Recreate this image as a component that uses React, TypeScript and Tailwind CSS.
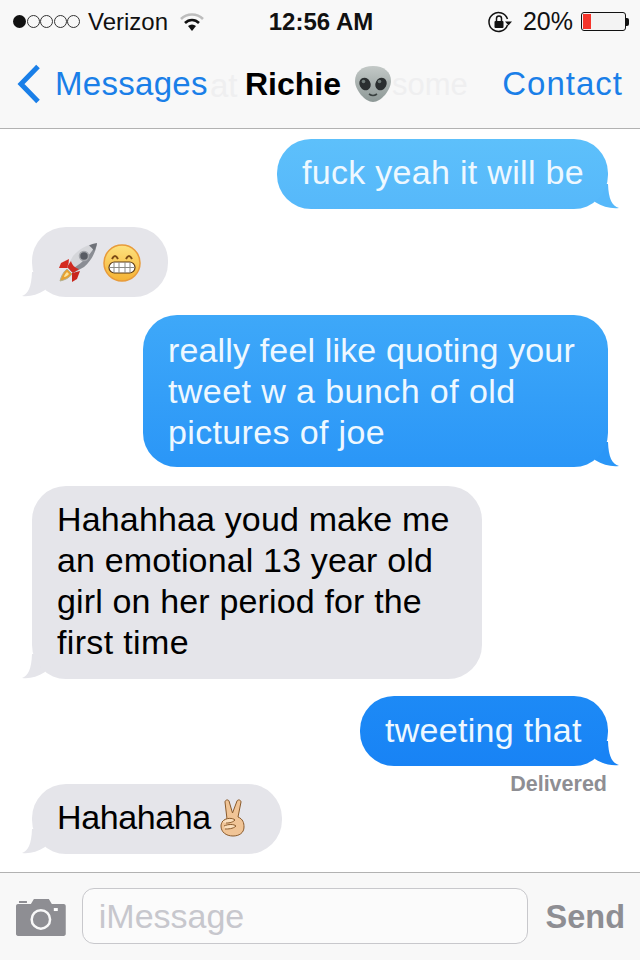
import type { ReactNode } from 'react'

function Tail({ side, className }: { side: 'left' | 'right'; className: string }) {
  if (side === 'right') {
    return (
      <svg className={`absolute right-[-12px] bottom-0 -z-10 ${className}`} width="25" height="25" viewBox="0 0 25 25">
        <path d="M0 18 C8 23 16 24.800 24 24 C17 22 13.500 15 13 0 L0 0Z" />
      </svg>
    )
  }
  return (
    <svg className={`absolute left-[-12px] bottom-0 -z-10 ${className}`} width="25" height="25" viewBox="0 0 25 25">
      <path d="M25 18 C17 23 10 24.800 2 24 C8 22 11.500 15 12 0 L25 0Z" />
    </svg>
  )
}

function Sent({ className, tail, children }: { className: string; tail: string; children: ReactNode }) {
  return (
    <div className="isolate flex justify-end pr-[32px]">
      <div className={`relative rounded-[34px] pl-[25px] text-[34px] leading-[41px] tracking-[0.15px] text-[#eef8ff] ${className}`}>
        <Tail side="right" className={tail} />
        <div className="relative whitespace-nowrap">{children}</div>
      </div>
    </div>
  )
}

function Received({ className, children }: { className: string; children: ReactNode }) {
  return (
    <div className="isolate flex justify-start pl-[32px]">
      <div className={`relative rounded-[34px] bg-[#e5e5ea] pl-[25px] text-[34px] leading-[41px] tracking-[0.15px] text-black ${className}`}>
        <Tail side="left" className="fill-[#e5e5ea]" />
        <div className="relative whitespace-nowrap">{children}</div>
      </div>
    </div>
  )
}

function Rocket() {
  return (
    <svg width="40" height="41" viewBox="0 0 40 41">
      <path d="M11 17 L3 21 L1 26 L10 26Z" fill="#d42a1f" />
      <path d="M22 29 L19 37 L14 40 L14 31Z" fill="#c9261c" />
      <path d="M9 27 C5 30 3 35 2 39 C7 38 11 36 14 32Z" fill="#e8a12f" stroke="#b5b08e" strokeWidth="1" />
      <path d="M9 30 C7 32 6 34 6 35 C8 35 10 33 11 32Z" fill="#fbe39a" />
      <path d="M39 1 C30 2 21 7 15 14 L9 25 L15 31 L26 25 C33 19 38 10 39 1Z" fill="#d5d6da" />
      <path d="M39 1 C38 10 33 19 26 25 L15 31 L12 28 C24 22 33 12 39 1Z" fill="#8a8d94" />
      <path d="M39 1 C36 1.500 33 2.500 31 3.500 C33 5 35 7 36 9 C37.500 6 38.500 4 39 1Z" fill="#6f7279" />
      <path d="M9 25 L15 31 L21 27 C17 26 14 23 13 19Z" fill="#cf2a20" />
      <circle cx="26" cy="14" r="4.500" fill="#585b63" stroke="#a4a6ab" strokeWidth="1.500" />
    </svg>
  )
}

function Grin() {
  return (
    <svg width="38" height="38" viewBox="0 0 38 38">
      <defs>
        <linearGradient id="grinFace" x1="0" y1="0" x2="0" y2="1">
          <stop offset="0" stopColor="#fde27f" />
          <stop offset="1" stopColor="#f5b233" />
        </linearGradient>
      </defs>
      <circle cx="19" cy="19" r="18" fill="url(#grinFace)" stroke="#e89b3a" strokeWidth="1.500" />
      <path d="M9 15 Q12 9 15 15 M23 15 Q26 9 29 15" fill="none" stroke="#7b4a14" strokeWidth="2" />
      <rect x="6" y="18" width="26" height="11" rx="5.500" fill="#fff" stroke="#5d3a14" strokeWidth="1.200" />
      <path d="M6 23.500 H32 M11 18 V29 M16 18 V29 M22 18 V29 M27 18 V29" stroke="#8a8a85" strokeWidth="1" />
    </svg>
  )
}

function Alien() {
  return (
    <svg width="38" height="38" viewBox="0 0 38 38">
      <defs>
        <linearGradient id="alienFace" x1="0" y1="0" x2="0" y2="1">
          <stop offset="0" stopColor="#c3c9c7" />
          <stop offset="1" stopColor="#8d9896" />
        </linearGradient>
      </defs>
      <path d="M19 1 C30 1 37 7 37 16 C37 25 27 37 19 37 C11 37 1 25 1 16 C1 7 8 1 19 1Z" fill="url(#alienFace)" />
      <ellipse cx="11" cy="19" rx="5.500" ry="6.500" fill="#2b2f30" transform="rotate(-28 11 19)" />
      <ellipse cx="27" cy="19" rx="5.500" ry="6.500" fill="#2b2f30" transform="rotate(28 27 19)" />
      <circle cx="9.500" cy="16.500" r="1.800" fill="#6f7a78" />
      <circle cx="25.500" cy="16.500" r="1.800" fill="#6f7a78" />
      <path d="M15 29 Q19 32 23 29" fill="none" stroke="#3a4140" strokeWidth="1.600" />
    </svg>
  )
}

function Peace() {
  return (
    <svg width="27" height="38" viewBox="0 0 27 38">
      <path d="M8 20 L6 3 C6 1 9 0 10 2 L13.500 14 L18 2 C19 0 22 1 22 3 L19 18 C24 20 25 24 25 28 C25 34 20 37 14 37 C7 37 2 33 2 27 C2 24 4 21 8 20Z" fill="#f0c496" stroke="#8a5a2b" strokeWidth="1" />
      <path d="M3 23 C7 18 14 19 16 21 C13 24 9 24 7 24 M5 27 C9 25 15 25 17 27 C14 30 9 30 6 30" fill="#fbdfbd" stroke="#8a5a2b" strokeWidth="1" />
    </svg>
  )
}

function Wifi() {
  return (
    <svg width="24" height="18" viewBox="0 0 24 18">
      <path d="M1 6 C7 0 17 0 23 6" fill="none" stroke="#bdbdbd" strokeWidth="2.600" />
      <path d="M5 10 C9 6 15 6 19 10" fill="none" stroke="#111" strokeWidth="2.600" />
      <path d="M8 13 C10.500 11 13.500 11 16 13 L12 18Z" fill="#111" />
    </svg>
  )
}

function RotationLock() {
  return (
    <svg width="24" height="22" viewBox="0 0 24 22">
      <path d="M19.500 14 A9.500 9.500 0 1 1 19.500 8" fill="none" stroke="#111" strokeWidth="1.500" />
      <path d="M17 10.500 H24 L20.500 14.500Z" fill="#111" />
      <rect x="6.500" y="10" width="9" height="7" rx="1" fill="#111" />
      <path d="M8.500 10 V7.500 A2.500 2.500 0 0 1 13.500 7.500 V10" fill="none" stroke="#111" strokeWidth="1.500" />
    </svg>
  )
}

function Camera() {
  return (
    <svg width="50" height="38" viewBox="0 0 50 38">
      <path fillRule="evenodd" fill="#8e8e93" d="M3 3 H11 V5 H3Z M2 6 H15 L18 1 H33 L36 6 H48 C49 6 50 7 50 8 V36 C50 37 49 38 48 38 H2 C1 38 0 37 0 36 V8 C0 7 1 6 2 6Z M25 11 A10.500 10.500 0 1 0 25 32 A10.500 10.500 0 1 0 25 11Z M25 13.500 A8 8 0 1 1 25 29.500 A8 8 0 1 1 25 13.500Z" />
      <rect x="38" y="10" width="4" height="3" fill="#fff" />
    </svg>
  )
}

export default function App() {
  return (
    <div className="flex h-[960px] w-[640px] flex-col overflow-hidden bg-white font-['Liberation_Sans',sans-serif]">
      {/* Status bar + nav */}
      <div className="h-[129px] shrink-0 border-b border-[#b2b2b2] bg-[#f8f8f8]">
        <div className="grid h-[42px] grid-cols-[1fr_auto_1fr] items-center whitespace-nowrap pl-[13px] pr-[11px] pt-[1px] text-[#111]">
          <div className="flex items-center text-[24px]">
            <div className="flex gap-[0.5px]">
              <span className="h-[13px] w-[13px] rounded-full bg-[#111]" />
              <span className="h-[13px] w-[13px] rounded-full border border-[#333]" />
              <span className="h-[13px] w-[13px] rounded-full border border-[#333]" />
              <span className="h-[13px] w-[13px] rounded-full border border-[#333]" />
              <span className="h-[13px] w-[13px] rounded-full border border-[#333]" />
            </div>
            <span className="ml-[8px]">Verizon</span>
            <span className="ml-[12px]"><Wifi /></span>
          </div>
          <span className="text-[24px] font-bold">12:56 AM</span>
          <div className="flex items-center justify-end text-[25px]">
            <RotationLock />
            <span className="ml-[11px]">20%</span>
            <div className="ml-[8px] flex items-center">
              <div className="h-[19px] w-[45px] rounded-[3px] border border-[#111] bg-[#f3f3f3] p-[1px]">
                <div className="h-full w-[8px] bg-[#f5352b]" />
              </div>
              <div className="h-[8px] w-[3px] rounded-r-[2px] bg-[#111]" />
            </div>
          </div>
        </div>
        <div className="relative flex h-[86px] items-center justify-between pb-[2px] pl-[17px] pr-[17px]">
          <div className="flex items-center">
            <svg width="24" height="40" viewBox="0 0 24 40">
              <path d="M21 2.500 L4 20 L21 37.500" fill="none" stroke="#1a7fe8" strokeWidth="5" />
            </svg>
            <span className="ml-[14px] text-[33px] tracking-[0.3px] text-[#1a7fe8]">Messages</span>
          </div>
          <span className="absolute left-[210px] top-[19px] text-[33px] text-[#efeff0]">at</span>
          <span className="absolute left-[392px] top-[20px] text-[31px] text-[#efeff0]">some</span>
          <div className="absolute left-[245px] top-[18px] flex items-center">
            <span className="text-[32px] font-bold text-black">Richie</span>
            <span className="ml-[13px]"><Alien /></span>
          </div>
          <span className="text-[33px] tracking-[1px] text-[#1a7fe8]">Contact</span>
        </div>
      </div>

      {/* Conversation */}
      <div className="flex flex-1 flex-col pt-[10px]">
        <Sent className="w-[331px] bg-linear-to-b from-[#5dc0fb] to-[#56b8fa] pb-[16px] pt-[13px]" tail="fill-[#56b8fa]">
          <div className="tracking-[0.3px]">fuck yeah it will be</div>
        </Sent>
        <div className="mt-[18px]">
          <Received className="w-[136px] pb-[14px] pt-[15px]">
            <div className="flex h-[41px] items-center gap-[5px] pl-[1px]">
              <Rocket />
              <Grin />
            </div>
          </Received>
        </div>
        <div className="mt-[18px]">
          <Sent className="w-[465px] bg-linear-to-b from-[#3ea8f9] to-[#2a96f7] pb-[14px] pt-[15px]" tail="fill-[#2a96f7]">
            <div>really feel like quoting your</div>
            <div className="tracking-[0.42px]">tweet w a bunch of old</div>
            <div className="tracking-[0.35px]">pictures of joe</div>
          </Sent>
        </div>
        <div className="mt-[19px]">
          <Received className="w-[450px] pb-[16px] pt-[13px]">
            <div>Hahahhaa youd make me</div>
            <div>an emotional 13 year old</div>
            <div>girl on her period for the</div>
            <div className="tracking-[0.35px]">first time</div>
          </Received>
        </div>
        <div className="mt-[17px]">
          <Sent className="w-[248px] bg-linear-to-b from-[#1d8af6] to-[#1883f5] pb-[15px] pt-[14px]" tail="fill-[#1883f5]">
            <div className="tracking-[0.3px]">tweeting that</div>
          </Sent>
        </div>
        <div className="mt-[5px] pr-[33px] text-right text-[21.5px] font-bold leading-[26px] text-[#8e8e93]">Delivered</div>
        <div className="mt-[-13px]">
          <Received className="w-[250px] pb-[16px] pt-[13px]">
            <div className="flex items-center gap-[8px]">
              <span className="tracking-[-0.4px]">Hahahaha</span>
              <Peace />
            </div>
          </Received>
        </div>
      </div>

      {/* Composer */}
      <div className="flex h-[88px] shrink-0 items-center border-t border-[#b2b2b2] bg-[#f8f8f8] pl-[16px] pr-[15px]">
        <Camera />
        <div className="mb-[1px] ml-[16px] flex h-[56px] w-[448px] items-center rounded-[12px] border border-[#c8c8cc] bg-[#fbfbfb] pl-[16px] text-[34px] text-[#c7c7cd]">iMessage</div>
        <span className="ml-[18px] pt-[2px] text-[32.5px] font-bold text-[#8e8e93]">Send</span>
      </div>
    </div>
  )
}
